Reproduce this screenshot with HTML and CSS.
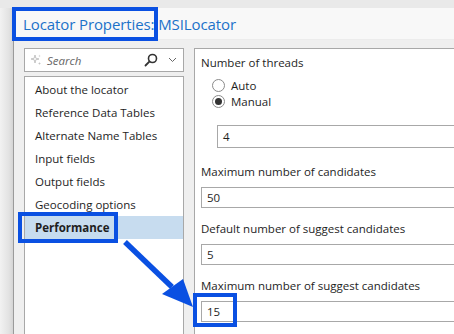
FILE: index.html
```html
<!DOCTYPE html>
<html>
<head>
<meta charset="utf-8">
<link rel="stylesheet" href="styles.css">
</head>
<body>
<div class="screen">
  <div class="shadow"></div>
  <div class="main">
    <div class="topstrip"></div>
    <div class="window">
      <div class="titlebar"><span class="title">Locator Properties: MSILocator</span></div>
      <div class="content">
        <div class="leftpane">
          <div class="search">
            <svg class="sparkle" width="12" height="12" viewBox="0 0 12 12"><path d="M5 1 L5.8 4.2 L9 5 L5.8 5.8 L5 9 L4.2 5.8 L1 5 L4.2 4.2 Z" fill="none" stroke="#b8b8b8" stroke-width="0.8"/><path d="M9.5 8 L9.9 9.1 L11 9.5 L9.9 9.9 L9.5 11 L9.1 9.9 L8 9.5 L9.1 9.1 Z" fill="#c4c4c4"/><path d="M9.5 0.5 L9.8 1.7 L11 2 L9.8 2.3 L9.5 3.5 L9.2 2.3 L8 2 L9.2 1.7 Z" fill="#c4c4c4"/></svg>
            <span class="placeholder">Search</span>
            <svg class="mag" width="14" height="14" viewBox="0 0 14 14"><circle cx="8.5" cy="5.5" r="4" fill="none" stroke="#333" stroke-width="1.6"/><path d="M5.6 8.4 L1.5 12.5" stroke="#333" stroke-width="1.8" stroke-linecap="round"/></svg>
            <svg class="chev" width="9" height="6" viewBox="0 0 9 6"><path d="M1 1 L4.5 4.5 L8 1" fill="none" stroke="#666" stroke-width="1"/></svg>
          </div>
          <ul class="list">
            <li>About the locator</li>
            <li>Reference Data Tables</li>
            <li>Alternate Name Tables</li>
            <li>Input fields</li>
            <li>Output fields</li>
            <li>Geocoding options</li>
            <li class="selected">Performance</li>
          </ul>
        </div>
        <div class="rightpane">
          <div class="label">Number of threads</div>
          <div class="radios">
            <div class="radio"><span class="circle"></span>Auto</div>
            <div class="radio"><span class="circle checked"></span>Manual</div>
          </div>
          <div class="input threads">4</div>
          <div class="label">Maximum number of candidates</div>
          <div class="input">50</div>
          <div class="label">Default number of suggest candidates</div>
          <div class="input">5</div>
          <div class="label">Maximum number of suggest candidates</div>
          <div class="input">15</div>
        </div>
      </div>
    </div>
  </div>
</div>
<div class="hl hl-title"></div>
<div class="hl hl-perf"></div>
<div class="hl hl-fifteen"></div>
<svg class="arrow" width="454" height="334" viewBox="0 0 454 334">
  <path d="M125 242 L172 287" stroke="#0a50e2" stroke-width="5.5" stroke-linecap="butt"/>
  <polygon points="183,279 162,294 193,307" fill="#0a50e2"/>
</svg>
</body>
</html>
```

FILE: styles.css
```css
html, body {
  margin: 0;
  padding: 0;
  width: 454px;
  height: 334px;
  overflow: hidden;
  background: #f0f0f0;
  font-family: "Open Sans", "Noto Sans", sans-serif;
  font-size: 11.5px;
  color: #1e1e1e;
}
.screen {
  display: flex;
  width: 454px;
  height: 334px;
  position: relative;
}
.shadow {
  width: 13px;
  flex: none;
  background: linear-gradient(to right, #f2f2f2, #e2e2e2 70%, #d4d4d4);
  border-right: 1px solid #9a9a9a;
}
.main {
  flex: 1;
  display: flex;
  flex-direction: column;
  min-width: 0;
}
.topstrip {
  height: 8px;
  flex: none;
  background: #e9e9e9;
  margin-left: -14px;
}
.window {
  flex: 1;
  display: flex;
  flex-direction: column;
  background: #efefef;
}
.titlebar {
  height: 31px;
  flex: none;
  background: #f8f8f8;
  display: flex;
  align-items: center;
  padding-left: 9px;
  border-bottom: 1px solid #ececec;
}
.title {
  font-size: 15px;
  color: #1c72c9;
  letter-spacing: -0.1px;
}
.content {
  flex: 1;
  display: flex;
  gap: 10px;
  padding: 8px 0 0 10px;
  min-height: 0;
}
.leftpane {
  width: 160px;
  flex: none;
  display: flex;
  flex-direction: column;
  gap: 4px;
}
.search {
  height: 22px;
  border: 1px solid #a8a8a8;
  background: #fff;
  display: flex;
  align-items: center;
  padding: 0 6px 0 5px;
}
.sparkle { margin-right: 5px; }
.placeholder {
  flex: 1;
  font-style: italic;
  color: #666;
}
.mag { margin-right: 10px; }
.list {
  flex: 1;
  margin: 0;
  padding: 1px 0 0 0;
  list-style: none;
  border: 1px solid #a8a8a8;
  border-bottom: none;
  background: #fff;
}
.list li {
  height: 23px;
  line-height: 23px;
  padding-left: 10px;
}
.list li.selected {
  background: #c7dcef;
  font-weight: bold;
}
.rightpane {
  flex: 1;
  border: 1px solid #a8a8a8;
  border-right: none;
  border-bottom: none;
  background: #fff;
  padding: 6px 0 0 6px;
  display: flex;
  flex-direction: column;
}
.label {
  line-height: 16px;
  margin-bottom: 7px;
}
.radios {
  padding-left: 11px;
  margin-top: -1px;
}
.radio {
  display: flex;
  align-items: center;
  height: 16px;
  gap: 6px;
}
.circle {
  width: 11px;
  height: 11px;
  border: 1px solid #8a8a8a;
  border-radius: 50%;
  background: #fff;
  display: flex;
  align-items: center;
  justify-content: center;
}
.circle.checked::after {
  content: "";
  width: 7px;
  height: 7px;
  border-radius: 50%;
  background: #333;
}
.input {
  height: 19px;
  line-height: 19px;
  border: 1px solid #a8a8a8;
  border-right: none;
  padding-left: 5px;
  margin-bottom: 13px;
}
.input.threads {
  height: 21px;
  line-height: 21px;
  margin-left: 16px;
  margin-top: 16px;
  margin-bottom: 16px;
}
.hl {
  position: absolute;
  border: 4px solid #0a50e2;
  box-sizing: border-box;
}
.hl-title { left: 12px; top: 7px; width: 146px; height: 34px; }
.hl-perf { left: 18px; top: 212px; width: 100px; height: 31px; }
.hl-fifteen { left: 193px; top: 293px; width: 44px; height: 34px; }
.arrow { position: absolute; left: 0; top: 0; }
```
